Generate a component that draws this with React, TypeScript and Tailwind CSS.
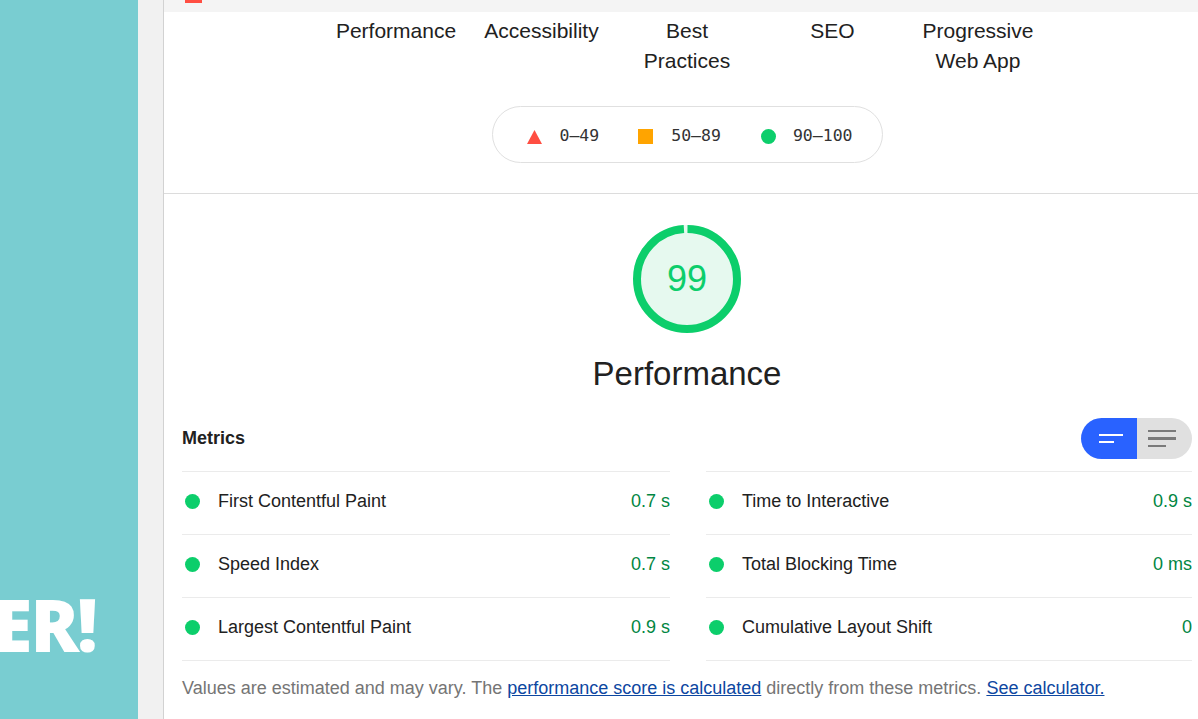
import React from "react";

const categories = [
  { name: "Performance" },
  { name: "Accessibility" },
  { name: "Best Practices" },
  { name: "SEO" },
  { name: "Progressive Web App" },
];

const leftMetrics = [
  { label: "First Contentful Paint", value: "0.7 s" },
  { label: "Speed Index", value: "0.7 s" },
  { label: "Largest Contentful Paint", value: "0.9 s" },
];

const rightMetrics = [
  { label: "Time to Interactive", value: "0.9 s" },
  { label: "Total Blocking Time", value: "0 ms" },
  { label: "Cumulative Layout Shift", value: "0" },
];

const sans = { fontFamily: '"Liberation Sans", Arial, sans-serif' };
const mono = { fontFamily: '"DejaVu Sans Mono", "Liberation Mono", monospace' };

function Gauge({ score }: { score: number }) {
  const r = 50;
  const c = 2 * Math.PI * r;
  return (
    <div className="relative h-[108px] w-[108px]">
      <svg width="108" height="108" viewBox="0 0 108 108" className="-rotate-90">
        <circle cx="54" cy="54" r={r} fill="#e6f9ef" stroke="#e6f9ef" strokeWidth="8" />
        <circle
          cx="54"
          cy="54"
          r={r}
          fill="none"
          stroke="#0cce6b"
          strokeWidth="8"
          strokeDasharray={`${(c * score) / 100 - 1} ${c}`}
          style={{ strokeDashoffset: -0.5 }}
        />
      </svg>
      <div className="absolute inset-0 flex items-center justify-center text-[36px] text-[#0cce6b]" style={sans}>
        {score}
      </div>
    </div>
  );
}

function MetricRow({ label, value }: { label: string; value: string }) {
  return (
    <div className="flex h-[63px] items-center border-t border-[#ebebeb] pb-[3px] pl-[3px]">
      <span className="h-[15px] w-[15px] rounded-full bg-[#0cce6b]" />
      <span className="ml-[18px] flex-1 text-[18px] text-[#212121]">{label}</span>
      <span className="text-[18px] text-[#018642]">{value}</span>
    </div>
  );
}

export default function App() {
  return (
    <div className="flex h-[719px] w-[1198px] overflow-hidden bg-white" style={sans}>
      {/* left teal panel */}
      <aside className="flex w-[138px] shrink-0 flex-col justify-end overflow-hidden bg-[#79cdd1] pb-[59px]">
        <div
          className="whitespace-nowrap pr-[42px] text-right text-[72px] font-extrabold leading-none tracking-[-2px] text-white"
          style={{ fontFamily: '"Open Sans", sans-serif', direction: "rtl" }}
        >
          <span style={{ direction: "ltr", unicodeBidi: "bidi-override" }}>ANSWER!</span>
        </div>
      </aside>
      <div className="w-[26px] shrink-0 border-r border-[#d2d2d2] bg-[#f1f1f1]" />

      <main className="flex flex-1 flex-col">
        <div className="relative h-[12px] bg-[#f4f4f4]">
          <span className="absolute left-[21px] top-0 h-[3px] w-[17px] bg-[#ff4e42]" />
        </div>

        <div className="border-b border-[#dcdcdc] pl-[18px] pr-[6px]">
          {/* categories */}
          <div className="flex justify-center pt-[4px]">
            {categories.map((c) => (
              <div key={c.name} className="w-[145.5px] px-[10px] text-center text-[21px] leading-[30px] text-[#212121]">
                {c.name}
              </div>
            ))}
          </div>

          {/* legend */}
          <div className="mb-[30px] mt-[30px] flex justify-center">
            <div
              className="flex h-[57px] w-[391px] items-center rounded-full border border-[#e0e0e0] pl-[34px] pt-[4px] text-[16.5px] text-[#333]"
              style={mono}
            >
              <svg width="15" height="14" viewBox="0 0 15 14">
                <polygon points="7.5,0 15,14 0,14" fill="#ff4e42" />
              </svg>
              <span className="ml-[18px]">0–49</span>
              <span className="ml-[39px] h-[15px] w-[15px] bg-[#ffa400]" />
              <span className="ml-[18px]">50–89</span>
              <span className="ml-[40px] h-[15px] w-[15px] rounded-full bg-[#0cce6b]" />
              <span className="ml-[17px]">90–100</span>
            </div>
          </div>
        </div>

        <div className="flex flex-col pl-[18px] pr-[6px]">
          <div className="flex flex-col items-center pt-[31px]">
            <Gauge score={99} />
            <h1 className="mt-[21px] text-[33px] leading-[40px] text-[#212121]">Performance</h1>
          </div>

          {/* metrics header */}
          <div className="mt-[24px] flex items-center justify-between pb-[12px]">
            <span className="text-[18px] font-bold text-[#212121]">Metrics</span>
            <div className="flex h-[41px] w-[111px] overflow-hidden rounded-full">
              <div className="flex w-[56px] items-center justify-center bg-[#2962ff]">
                <div className="flex flex-col gap-[4.5px] pl-[4px]">
                  <span className="h-[2.5px] w-[24px] bg-white" />
                  <span className="h-[2.5px] w-[15px] bg-white" />
                </div>
              </div>
              <div className="flex flex-1 items-center justify-start bg-[#e0e0e0] pl-[11px]">
                <div className="flex flex-col gap-[5px]">
                  <span className="h-[2.5px] w-[28px] bg-[#7a7a7a]" />
                  <span className="h-[2.5px] w-[28px] bg-[#7a7a7a]" />
                  <span className="h-[2.5px] w-[18px] bg-[#7a7a7a]" />
                </div>
              </div>
            </div>
          </div>

          {/* metrics grid */}
          <div className="grid grid-cols-[488px_1fr] gap-x-[36px]">
            <div className="border-b border-[#ebebeb]">
              {leftMetrics.map((m) => (
                <MetricRow key={m.label} {...m} />
              ))}
            </div>
            <div className="border-b border-[#ebebeb]">
              {rightMetrics.map((m) => (
                <MetricRow key={m.label} {...m} />
              ))}
            </div>
          </div>

          <p className="mt-[15px] text-[18px] leading-[24px] text-[#757575]">
            Values are estimated and may vary. The{" "}
            <a className="text-[#0d47a1] underline">performance score is calculated</a> directly from these metrics.{" "}
            <a className="text-[#0d47a1] underline">See calculator.</a>
          </p>
        </div>
      </main>
    </div>
  );
}
